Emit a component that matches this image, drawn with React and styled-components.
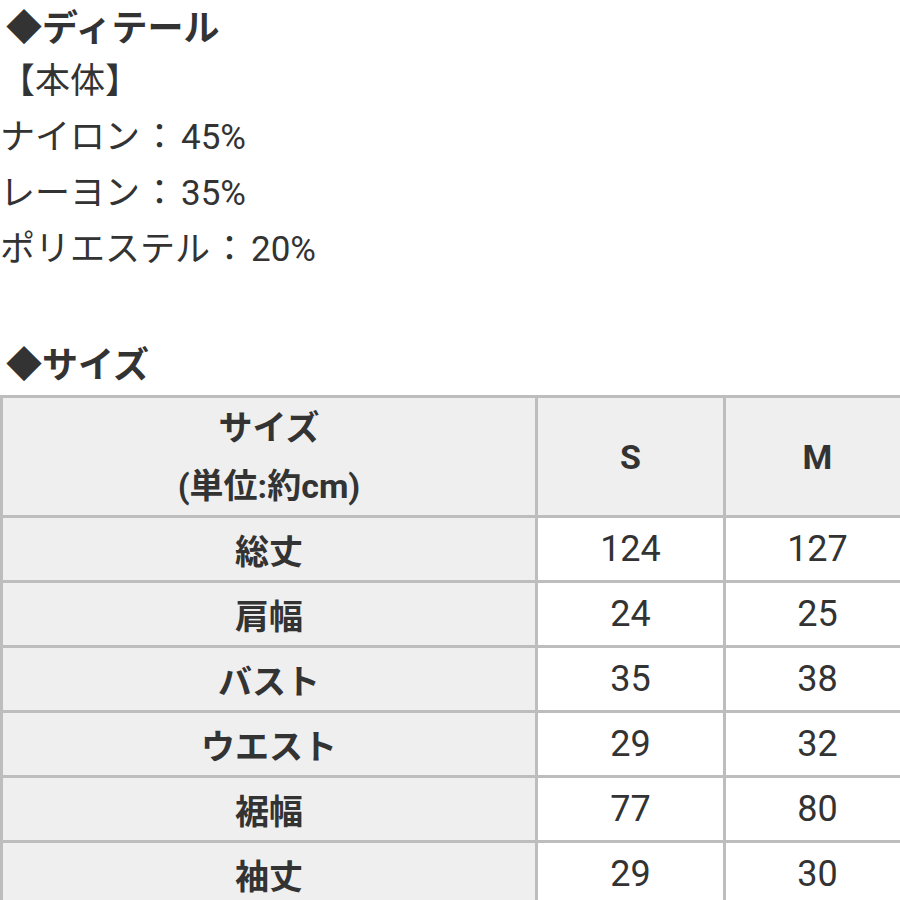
import React from 'react';
import styled, { createGlobalStyle } from 'styled-components';

const GlobalStyle = createGlobalStyle`
    html, body {
        margin: 0;
        padding: 0;
        background: #fff;
        overflow: hidden;
    }
    body {
        width: 900px;
        height: 900px;
        font-family: Roboto, "Noto Sans CJK JP", sans-serif;
        color: #333;
    }
`

const StyledPage = styled.div`
    width: 900px;
    overflow: hidden;
`

const SectionTitle = styled.h2`
    margin: ${props => props.first ? '0 0 4px 0' : '59px 0 8px 0'};
    padding-left: 6px;
    font-size: 36px;
    line-height: 50px;
    font-weight: bold;
    color: #333;
    font-family: "Noto Sans CJK JP", sans-serif;
`

const DetailLine = styled.div`
    font-size: 35px;
    line-height: 56px;
    white-space: nowrap;
    .sep {
        margin: 0 4px 0 2px;
    }
`

const SizeTable = styled.table`
    width: 912px;
    border-collapse: collapse;
    table-layout: fixed;
    border-left: 2px solid #dcdcdc;
    td {
        border: 3px solid #bdbdbd;
        text-align: center;
        padding: 0;
    }
`

const HeadCell = styled.td`
    background: #efefef;
    font-weight: bold;
    font-size: 34px;
    line-height: 58px;
    height: 117px;
`

const LabelCell = styled.td`
    background: #efefef;
    font-weight: bold;
    font-size: 34px;
    height: 62px;
    font-family: "Noto Sans CJK JP", sans-serif;
`

const ValueCell = styled.td`
    background: #fff;
    font-size: 36px;
    height: 62px;
`

const materials = [
    ['ナイロン', '45%'],
    ['レーヨン', '35%'],
    ['ポリエステル', '20%'],
];

const rows = [
    ['総丈', 124, 127],
    ['肩幅', 24, 25],
    ['バスト', 35, 38],
    ['ウエスト', 29, 32],
    ['裾幅', 77, 80],
    ['袖丈', 29, 30],
];

const App = () => (
    <StyledPage>
        <GlobalStyle />
        <SectionTitle first>◆ディテール</SectionTitle>
        <DetailLine>【本体】</DetailLine>
        {materials.map(([name, pct]) => (
            <DetailLine key={name}>{name}<span className='sep'>：</span>{pct}</DetailLine>
        ))}
        <SectionTitle>◆サイズ</SectionTitle>
        <SizeTable>
            <colgroup>
                <col style={{width: 535}} />
                <col style={{width: 188}} />
                <col />
            </colgroup>
            <tbody>
                <tr>
                    <HeadCell>サイズ<br />(単位:約cm)</HeadCell>
                    <HeadCell>S</HeadCell>
                    <HeadCell>M</HeadCell>
                </tr>
                {rows.map(([label, s, m]) => (
                    <tr key={label}>
                        <LabelCell>{label}</LabelCell>
                        <ValueCell>{s}</ValueCell>
                        <ValueCell>{m}</ValueCell>
                    </tr>
                ))}
            </tbody>
        </SizeTable>
    </StyledPage>
);

export default App;
